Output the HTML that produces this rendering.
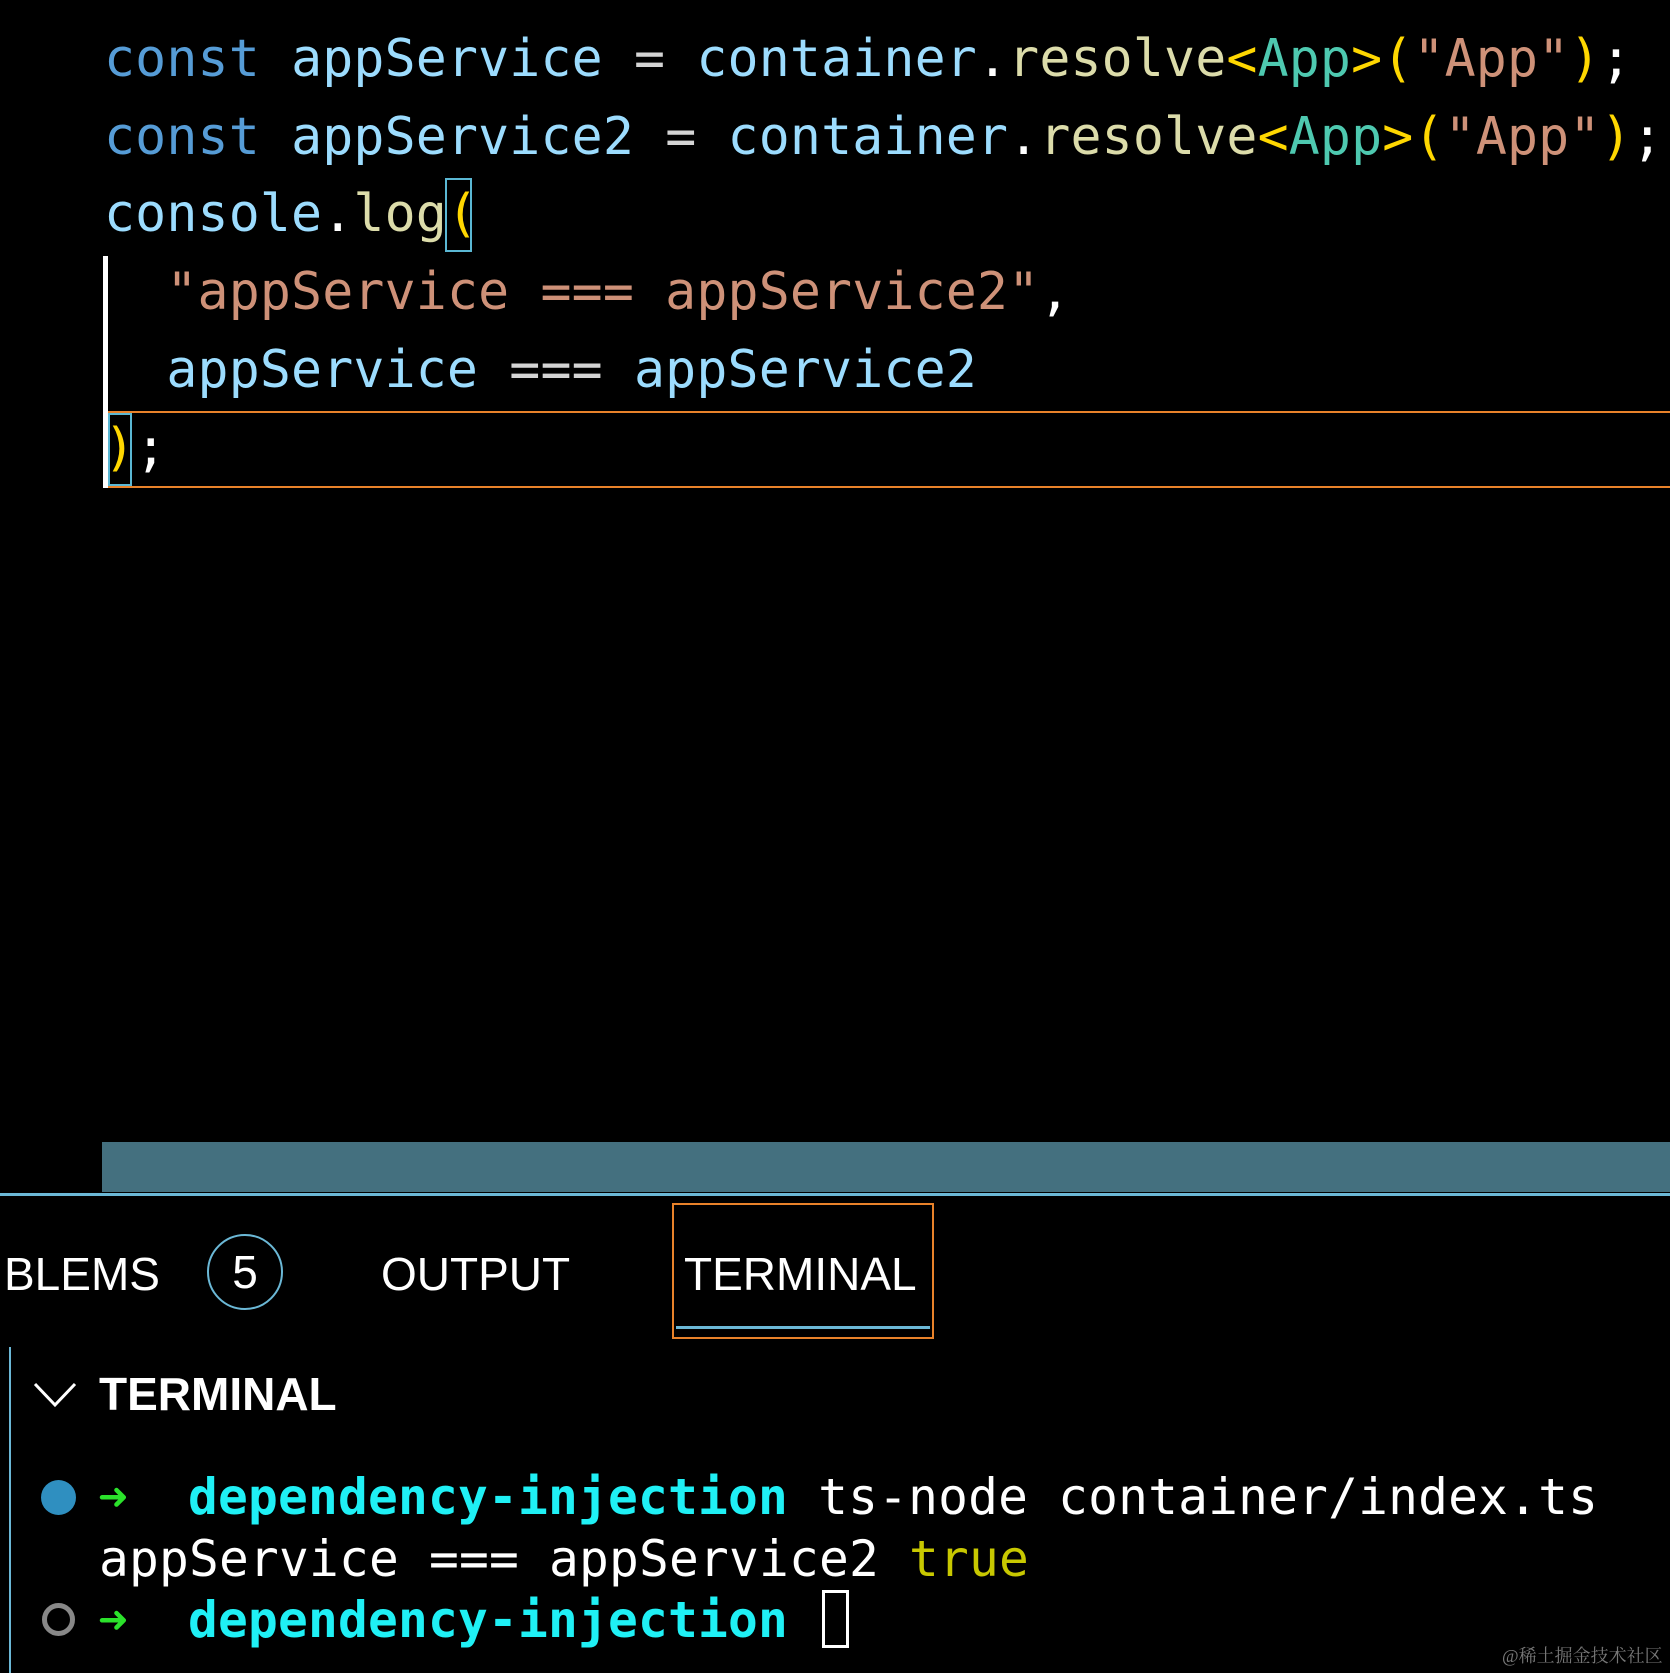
<!DOCTYPE html>
<html><head><meta charset="utf-8"><style>
body{margin:0;width:1670px;height:1673px;background:#000;overflow:hidden;position:relative}
.c{position:absolute;left:104px;font-family:"DejaVu Sans Mono","Liberation Mono",monospace;font-size:51.5px;line-height:78px;height:78px;white-space:pre;color:#9cdcfe;letter-spacing:0.17px}
.k{color:#569cd6}.o{color:#d4d4d4}.f{color:#dcdcaa}.y{color:#ffd700}.t{color:#4ec9b0}.s{color:#ce9178}.w{color:#fff}
.a{position:absolute}
.tab{position:absolute;font-family:"Liberation Sans",sans-serif;font-size:46px;color:#fff;line-height:56px;top:1246px}
.m{position:absolute;font-family:"DejaVu Sans Mono","Liberation Mono",monospace;font-size:49.5px;line-height:62px;white-space:pre;color:#fff;letter-spacing:0.2px}
.cy{color:#1ff0f5;font-weight:bold}
</style></head><body>
<div class="c" style="top:20px"><span class="k">const</span> appService <span class="o">=</span> container<span class="w">.</span><span class="f">resolve</span><span class="y">&lt;</span><span class="t">App</span><span class="y">&gt;(</span><span class="s">"App"</span><span class="y">)</span><span class="w">;</span></div>
<div class="c" style="top:98px"><span class="k">const</span> appService2 <span class="o">=</span> container<span class="w">.</span><span class="f">resolve</span><span class="y">&lt;</span><span class="t">App</span><span class="y">&gt;(</span><span class="s">"App"</span><span class="y">)</span><span class="w">;</span></div>
<div class="c" style="top:175px">console<span class="w">.</span><span class="f">log</span><span class="y">(</span></div>
<div class="c" style="top:253px">  <span class="s">"appService === appService2"</span><span class="w">,</span></div>
<div class="c" style="top:331px">  appService <span class="o">===</span> appService2</div>
<div class="c" style="top:409px"><span class="y">)</span><span class="w">;</span></div>
<div class="a" style="left:445px;top:178px;width:27px;height:74px;border:2px solid #5bb8d4;box-sizing:border-box"></div>
<div class="a" style="left:103px;top:256px;width:5px;height:232px;background:#fff"></div>
<div class="a" style="left:108px;top:411px;width:1562px;height:2px;background:#e8822a"></div>
<div class="a" style="left:108px;top:486px;width:1562px;height:2px;background:#e8822a"></div>
<div class="a" style="left:108px;top:413px;width:24px;height:73px;border:2px solid #5bb8d4;box-sizing:border-box"></div>
<div class="a" style="left:102px;top:1142px;width:1568px;height:50px;background:#44707f"></div>
<div class="a" style="left:0;top:1193px;width:1670px;height:3px;background:#6bb8d6"></div>
<div class="tab" style="left:4px">BLEMS</div>
<div class="a" style="left:207px;top:1234px;width:76px;height:76px;border:2px solid #6bb8d6;border-radius:50%;box-sizing:border-box;font-family:'Liberation Sans',sans-serif;font-size:46px;color:#fff;text-align:center;line-height:72px">5</div>
<div class="tab" style="left:381px">OUTPUT</div>
<div class="a" style="left:672px;top:1203px;width:262px;height:136px;border:2px solid #e8822a;box-sizing:border-box"></div>
<div class="a" style="left:676px;top:1326px;width:254px;height:3px;background:#6bb8d6"></div>
<div class="tab" style="left:684px">TERMINAL</div>
<div class="a" style="left:9px;top:1347px;width:2px;height:326px;background:#6bb8d6"></div>
<svg class="a" style="left:32px;top:1380px" width="46" height="30"><path d="M3 4 L23 25 L43 4" stroke="#fff" stroke-width="3" fill="none"/></svg>
<div class="tab" style="left:99px;top:1366px;font-weight:bold">TERMINAL</div>
<div class="a" style="left:41px;top:1480px;width:35px;height:35px;border-radius:50%;background:#2f8fc0"></div>
<div class="a" style="left:42px;top:1603px;width:33px;height:33px;border-radius:50%;border:5px solid #888;box-sizing:border-box"></div>
<div class="m" style="left:98px;top:1466px"><span style="color:#2be22b;font-weight:bold">➜</span>  <span class="cy">dependency-injection</span> ts-node container/index.ts</div>
<div class="m" style="left:99px;top:1528px">appService === appService2 <span style="color:#c8c800">true</span></div>
<div class="m" style="left:98px;top:1589px"><span style="color:#2be22b;font-weight:bold">➜</span>  <span class="cy">dependency-injection</span></div>
<div class="a" style="left:822px;top:1590px;width:27px;height:58px;border:3px solid #fff;box-sizing:border-box"></div>
<div class="a" style="left:1502px;top:1642px;font-family:'Liberation Serif','Noto Serif CJK SC',serif;font-size:18px;color:#777;white-space:nowrap">@稀土掘金技术社区</div>
</body></html>
